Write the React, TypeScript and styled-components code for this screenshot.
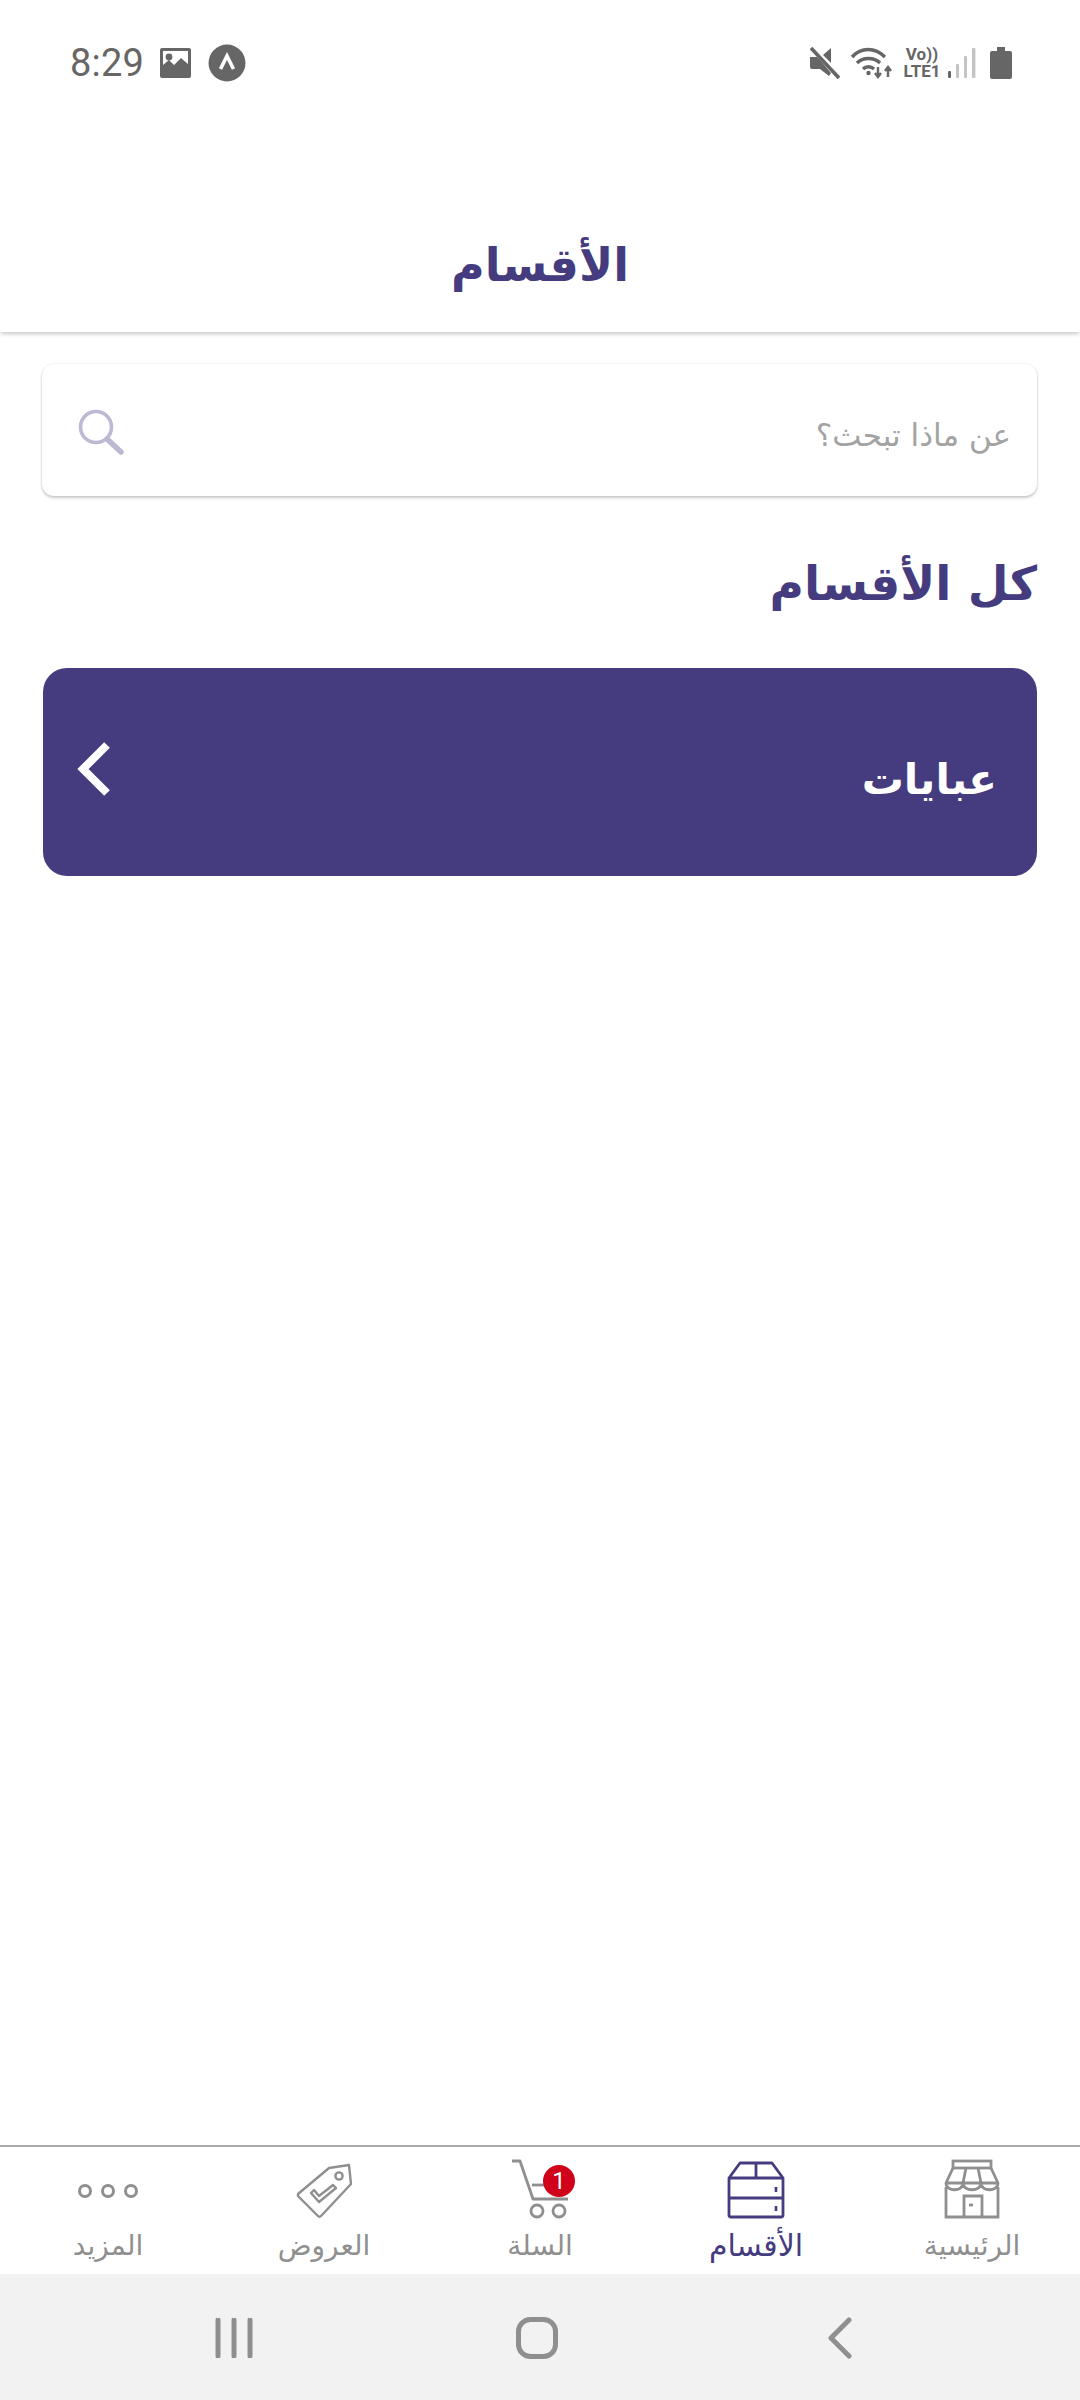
import React from "react";
import styled, { createGlobalStyle } from "styled-components";

const purple = "#453c7f";
const grey = "#8f8f8f";
const statusGrey = "#666666";
const arabicFont = `"DejaVu Sans", "Noto Sans", sans-serif`;

const GlobalStyle = createGlobalStyle`
  html, body {
    margin: 0;
    padding: 0;
    background: #ffffff;
  }
  * {
    box-sizing: border-box;
  }
`;

const Page = styled.div`
  width: 1080px;
  height: 2400px;
  display: flex;
  flex-direction: column;
  background: #ffffff;
  overflow: hidden;
`;

const StatusBar = styled.div`
  height: 126px;
  flex: none;
  display: flex;
  justify-content: space-between;
  align-items: flex-start;
  padding: 44px 68px 0 70px;
  background: #ffffff;
`;

const StatusGroup = styled.div`
  display: flex;
  align-items: center;
  height: 38px;
`;

const Time = styled.span`
  font: 400 38px/38px Roboto, sans-serif;
  color: ${statusGrey};
  margin-right: 16px;
  letter-spacing: 0.2px;
`;

const VolteIcon = styled.div`
  display: flex;
  flex-direction: column;
  align-items: center;
  width: 42px;
  margin: 0 5px 0 8px;
  color: ${statusGrey};
  font: 700 17px/17px Roboto, sans-serif;
  white-space: nowrap;
`;

const Header = styled.header`
  height: 206px;
  flex: none;
  display: flex;
  justify-content: center;
  align-items: center;
  padding-top: 72px;
  background: #ffffff;
  box-shadow: 0 3px 4px -1px rgba(0, 0, 0, 0.22);
`;

const Title = styled.h1`
  margin: 0;
  font: 700 46px/60px ${arabicFont};
  color: ${purple};
`;

const Content = styled.main`
  flex: 1;
  direction: rtl;
  padding: 32px 43px 0 42px;
  display: flex;
  flex-direction: column;
`;

const SearchBox = styled.div`
  height: 132px;
  display: flex;
  align-items: center;
  justify-content: space-between;
  padding: 4px 26px 0 36px;
  background: #ffffff;
  border-radius: 12px;
  box-shadow: 0 2px 3px rgba(0, 0, 0, 0.2), 0 0 2px rgba(0, 0, 0, 0.12);
`;

const Placeholder = styled.span`
  font: 400 31px/40px ${arabicFont};
  color: #a3a3a3;
  margin-top: 6px;
`;

const SectionTitle = styled.h2`
  margin: 54px 0 0;
  height: 78px;
  font: 700 47px/68px ${arabicFont};
  color: ${purple};
`;

const CategoryCard = styled.div`
  margin: 40px 0 0 1px;
  height: 208px;
  display: flex;
  align-items: center;
  justify-content: space-between;
  padding: 0 40px 0 32px;
  background: ${purple};
  border-radius: 24px;
`;

const CategoryName = styled.span`
  font: 700 42px/56px ${arabicFont};
  color: #ffffff;
  margin-top: 16px;
`;

const BottomNav = styled.nav`
  height: 129px;
  flex: none;
  direction: rtl;
  display: grid;
  grid-template-columns: repeat(5, 216px);
  border-top: 2px solid #aaaaaa;
  background: #ffffff;
`;

const NavItem = styled.div<{ $active?: boolean }>`
  display: flex;
  flex-direction: column;
  align-items: center;
  color: ${({ $active }) => ($active ? purple : grey)};
`;

const NavIcon = styled.div`
  position: relative;
  height: 72px;
  display: flex;
  align-items: flex-end;
  justify-content: center;
`;

const NavLabel = styled.span<{ $active?: boolean }>`
  font: 400 ${({ $active }) => ($active ? 30 : 28)}px/44px ${arabicFont};
  white-space: nowrap;
  margin-top: 5px;
`;

const CartBadge = styled.span`
  position: absolute;
  top: 18px;
  right: -7px;
  width: 32px;
  height: 32px;
  border-radius: 50%;
  background: #d0021b;
  color: #ffffff;
  font: 400 24px/32px Roboto, sans-serif;
  text-align: center;
`;

const SystemBar = styled.div`
  height: 126px;
  flex: none;
  display: flex;
  align-items: center;
  justify-content: space-between;
  padding: 2px 228px 0 215px;
  background: #f2f2f2;
`;

const HomeButton = styled.div`
  display: flex;
  margin-right: 10px;
`;

const ImageGlyph = () => (
  <svg width="31" height="30" viewBox="0 0 31 30" style={{ marginRight: 17 }}>
    <path fillRule="evenodd" fill={statusGrey} d="M2 0h27a2 2 0 0 1 2 2v26a2 2 0 0 1-2 2H2a2 2 0 0 1-2-2V2a2 2 0 0 1 2-2zM3 3v14l6-5 5 5 7-7 7 6V3z" />
    <circle cx="9" cy="9" r="3.4" fill={statusGrey} />
  </svg>
);

const AppBadge = () => (
  <svg width="38" height="38" viewBox="0 0 38 38">
    <circle cx="19" cy="19" r="18.5" fill={statusGrey} />
    <path d="M12.5 25L19 12l6.5 13" fill="none" stroke="#fff" strokeWidth="3.6" />
  </svg>
);

const MuteGlyph = () => (
  <svg width="32" height="34" viewBox="0 0 32 34">
    <path fill={statusGrey} d="M1 11h7l3 3 11 13-2 3-9-7H3a2 2 0 0 1-2-2z" />
    <path fill={statusGrey} d="M14 9l8-7v15z" />
    <path d="M2 2l28 30" stroke={statusGrey} strokeWidth="3.6" fill="none" />
  </svg>
);

const WifiGlyph = () => (
  <svg width="42" height="32" viewBox="0 0 42 32" style={{ marginLeft: 10 }}>
    <g fill="none" stroke={statusGrey} strokeWidth="3.4">
      <path d="M1 10C10 0 24 0 34 10" />
      <path d="M6 16c6-6 17-6 23 0" />
      <path d="M12 22c3-3 8-3 11 0" />
    </g>
    <circle cx="17.5" cy="26" r="2.2" fill={statusGrey} />
    <path d="M27 20v10M24 26l3 4 3-4M37 30V20M34 24l3-4 3 4" fill="none" stroke={statusGrey} strokeWidth="2.4" />
  </svg>
);

const SignalGlyph = () => (
  <svg width="28" height="32" viewBox="0 0 28 32">
    <rect x="0" y="24" width="3" height="7" rx="1" fill={statusGrey} />
    <rect x="8" y="17" width="3" height="14" rx="1" fill="#c4c4c4" />
    <rect x="16" y="9" width="3" height="22" rx="1" fill="#c4c4c4" />
    <rect x="24" y="1" width="3.4" height="30" rx="1" fill="#c4c4c4" />
  </svg>
);

const BatteryGlyph = () => (
  <svg width="22" height="32" viewBox="0 0 22 32" style={{ marginLeft: 14 }}>
    <path fill={statusGrey} d="M7 0h8v4h5a2 2 0 0 1 2 2v24a2 2 0 0 1-2 2H2a2 2 0 0 1-2-2V6a2 2 0 0 1 2-2h5z" />
  </svg>
);

const SearchGlyph = () => (
  <svg width="46" height="46" viewBox="0 0 46 46">
    <circle cx="18" cy="18" r="15.5" fill="none" stroke="#bcb9d2" strokeWidth="3.6" />
    <path d="M29 30l14 13" fill="none" stroke="#bcb9d2" strokeWidth="5.5" strokeLinecap="round" />
  </svg>
);

const ChevronGlyph = () => (
  <svg width="40" height="56" viewBox="0 0 40 56" style={{ marginBottom: 6 }}>
    <path d="M32 4L8 28l24 24" fill="none" stroke="#fff" strokeWidth="8" />
  </svg>
);

const StoreGlyph = () => (
  <svg width="56" height="60" viewBox="0 0 56 60" fill="none" stroke="currentColor" strokeWidth="2.8">
    <rect x="9" y="2" width="38" height="7" />
    <path d="M9 9L2 24c0 9 17 9 17 0 0 9 18 9 18 0 0 9 17 9 17 0L47 9" />
    <path d="M2 24h52M19 24l3-15M37 24l-3-15" />
    <path d="M2 28v30h52V28" />
    <path d="M20 58V37h18v21" />
    <path d="M25 46h4" />
  </svg>
);

const BoxGlyph = () => (
  <svg width="58" height="58" viewBox="0 0 58 58" fill="none" stroke="currentColor" strokeWidth="2.8" strokeLinejoin="round">
    <path d="M2 17L13 2h32l11 15v37a2 2 0 0 1-2 2H4a2 2 0 0 1-2-2z" />
    <path d="M2 17h54M29 2v15M2 37h54" />
    <path d="M49 26v5M49 45v5" strokeWidth="2.6" />
  </svg>
);

const CartGlyph = () => (
  <svg width="56" height="60" viewBox="0 0 56 60" fill="none" stroke="currentColor" strokeWidth="2.8">
    <path d="M0 2h8l13 38h35" strokeLinejoin="round" />
    <path d="M20 26h20" />
    <circle cx="25" cy="52" r="6" />
    <circle cx="47" cy="52" r="6" />
  </svg>
);

const TagGlyph = () => (
  <svg width="56" height="56" viewBox="0 0 56 56" fill="none" stroke="currentColor" strokeWidth="2.4" strokeLinejoin="round">
    <path d="M2 31L33 5l20-3 2 19-30 32a2 2 0 0 1-3 0L2 33z" />
    <circle cx="43" cy="13" r="3.6" />
    <path d="M15 30l8 9 17-14-3-3-14 11-5-6z" />
  </svg>
);

const DotsGlyph = () => (
  <svg width="62" height="16" viewBox="0 0 62 16" fill="none" stroke="currentColor" strokeWidth="3" style={{ marginBottom: 20 }}>
    <circle cx="8" cy="8" r="5.5" />
    <circle cx="31" cy="8" r="5.5" />
    <circle cx="54" cy="8" r="5.5" />
  </svg>
);

const MenuGlyph = () => (
  <svg width="40" height="40" viewBox="0 0 40 40">
    <path d="M3 2v36M19 2v36M35 2v36" stroke={grey} strokeWidth="5" strokeLinecap="round" />
  </svg>
);

const HomeGlyph = () => (
  <svg width="42" height="42" viewBox="0 0 42 42">
    <rect x="2.5" y="2.5" width="37" height="37" rx="12" fill="none" stroke={grey} strokeWidth="5" />
  </svg>
);

const BackGlyph = () => (
  <svg width="24" height="42" viewBox="0 0 24 42">
    <path d="M21 3L3 21l18 18" fill="none" stroke={grey} strokeWidth="5" strokeLinecap="round" strokeLinejoin="round" />
  </svg>
);

const navItems = [
  { label: "الرئيسية", icon: <StoreGlyph /> },
  { label: "الأقسام", icon: <BoxGlyph />, active: true },
  { label: "السلة", icon: <CartGlyph />, badge: 1 },
  { label: "العروض", icon: <TagGlyph /> },
  { label: "المزيد", icon: <DotsGlyph /> },
];

export default function App() {
  return (
    <>
      <GlobalStyle />
      <Page>
        <StatusBar>
          <StatusGroup>
            <Time>8:29</Time>
            <ImageGlyph />
            <AppBadge />
          </StatusGroup>
          <StatusGroup>
            <MuteGlyph />
            <WifiGlyph />
            <VolteIcon>
              <span>Vo))</span>
              <span>LTE1</span>
            </VolteIcon>
            <SignalGlyph />
            <BatteryGlyph />
          </StatusGroup>
        </StatusBar>
        <Header>
          <Title>الأقسام</Title>
        </Header>
        <Content>
          <SearchBox>
            <Placeholder>عن ماذا تبحث؟</Placeholder>
            <SearchGlyph />
          </SearchBox>
          <SectionTitle>كل الأقسام</SectionTitle>
          <CategoryCard>
            <CategoryName>عبايات</CategoryName>
            <ChevronGlyph />
          </CategoryCard>
        </Content>
        <BottomNav>
          {navItems.map(({ label, icon, active, badge }) => (
            <NavItem key={label} $active={active}>
              <NavIcon>
                {icon}
                {badge && <CartBadge>{badge}</CartBadge>}
              </NavIcon>
              <NavLabel $active={active}>{label}</NavLabel>
            </NavItem>
          ))}
        </BottomNav>
        <SystemBar>
          <MenuGlyph />
          <HomeButton>
            <HomeGlyph />
          </HomeButton>
          <BackGlyph />
        </SystemBar>
      </Page>
    </>
  );
}
